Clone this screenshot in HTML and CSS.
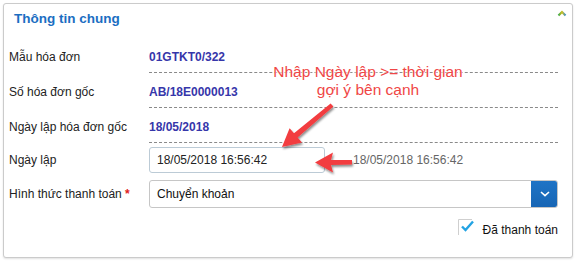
FILE: index.html
```html
<!DOCTYPE html>
<html lang="vi">
<head>
<meta charset="utf-8">
<title>Thông tin chung</title>
<link rel="stylesheet" href="styles.css">
</head>
<body>
<div class="panel">
  <div class="panel-head">
    <h2 class="title">Thông tin chung</h2>
    <svg class="collapse" width="10" height="7" viewBox="0 0 10 7">
      <defs>
        <linearGradient id="cg" x1="0" y1="0" x2="1" y2="0">
          <stop offset="0" stop-color="#3aa84a"/>
          <stop offset="0.5" stop-color="#d8c21e"/>
          <stop offset="1" stop-color="#3a90c8"/>
        </linearGradient>
      </defs>
      <polyline points="1.5,5.5 5,2 8.5,5.5" fill="none" stroke="url(#cg)" stroke-width="2.2"/>
    </svg>
  </div>
  <div class="panel-body">
    <div class="row info">
      <div class="label">Mẫu hóa đơn</div>
      <div class="value">01GTKT0/322</div>
    </div>
    <div class="row info">
      <div class="label">Số hóa đơn gốc</div>
      <div class="value">AB/18E0000013</div>
    </div>
    <div class="row info">
      <div class="label">Ngày lập hóa đơn gốc</div>
      <div class="value">18/05/2018</div>
    </div>
    <div class="row field field-date">
      <div class="label">Ngày lập</div>
      <div class="control-line">
        <div class="text-input">18/05/2018 16:56:42</div>
        <span class="hint">18/05/2018 16:56:42</span>
      </div>
    </div>
    <div class="row field field-select">
      <div class="label">Hình thức thanh toán <span class="req">*</span></div>
      <div class="select">
        <span class="select-text">Chuyển khoản</span>
        <span class="select-btn">
          <svg width="10" height="6" viewBox="0 0 10 6"><polyline points="1,1 5,4.6 9,1" fill="none" stroke="#fff" stroke-width="1.6"/></svg>
        </span>
      </div>
    </div>
    <div class="check-row">
      <svg class="checkbox" width="17" height="16" viewBox="0 0 17 16">
        <path d="M0.5 16 V0.5 H14" fill="none" stroke="#cfcfcf" stroke-width="1"/>
        <polyline points="4,7.5 7.5,11 15,2.5" fill="none" stroke="#23a3e3" stroke-width="2.4"/>
      </svg>
      <span class="check-label">Đã thanh toán</span>
    </div>
  </div>
</div>

<div class="annotation">Nhập Ngày lập &gt;= thời gian<br>gợi ý bên cạnh</div>

<svg class="arrows" width="575" height="262" viewBox="0 0 575 262">
  <defs>
    <filter id="sh" x="-20%" y="-20%" width="140%" height="140%">
      <feDropShadow dx="1" dy="2" stdDeviation="1.3" flood-color="#000" flood-opacity="0.45"/>
    </filter>
  </defs>
  <g fill="#f23c3f" filter="url(#sh)">
    <polygon points="282,147 302,142.5 297.6,137.6 333.4,106.6 330.6,103.4 294,133.2 289.6,128.2"/>
    <polygon points="315,162.5 333,172.5 331,165 352,164.5 352,160 331,160 333,152.5"/>
  </g>
</svg>
</body>
</html>
```
FILE: styles.css
```css
html, body {
  margin: 0;
  padding: 0;
  background: #fff;
}

body {
  position: relative;
  width: 575px;
  height: 262px;
  font-family: "Liberation Sans", Arial, sans-serif;
  font-size: 12px;
  color: #222;
}

.panel {
  box-sizing: border-box;
  margin: 3px 0 0 3px;
  width: 570px;
  height: 255px;
  border: 1px solid #cbcbcb;
  border-radius: 3px;
  box-shadow: 0 1px 2px rgba(0, 0, 0, 0.12);
  background: #fff;
}

.panel-head {
  box-sizing: border-box;
  height: 34px;
  padding: 6px 5px 0 10px;
  display: flex;
  justify-content: space-between;
  align-items: flex-start;
}

.title {
  margin: 0;
  font-size: 13.5px;
  line-height: 17px;
  font-weight: bold;
  color: #1b6ec2;
}

.collapse {
  margin-top: 0;
}

.panel-body {
  padding: 0 14px 0 5px;
}

.row {
  display: grid;
  grid-template-columns: 140px 1fr;
}

.label {
  line-height: 16px;
  color: #222;
}

.info {
  height: 35px;
}

.info .label,
.info .value {
  box-sizing: border-box;
  height: 35px;
  padding-top: 11px;
}

.info .value {
  border-bottom: 1px dashed #8a8a8a;
  font-weight: bold;
  color: #3636aa;
  line-height: 16px;
}

.field {
  align-items: center;
}

.field-date {
  padding-top: 4px;
}

.field-select {
  padding-top: 7px;
}

.control-line {
  display: flex;
  align-items: center;
}

.text-input {
  box-sizing: border-box;
  width: 176px;
  height: 26px;
  border: 1px solid #bccbd6;
  border-radius: 3px;
  padding: 0 7px;
  line-height: 24px;
  color: #222;
}

.hint {
  margin-left: 28px;
  color: #666;
  line-height: 16px;
}

.req {
  color: #e02020;
  font-weight: bold;
}

.select {
  box-sizing: border-box;
  height: 28px;
  border: 1px solid #c6c6c6;
  border-radius: 3px;
  display: flex;
  align-items: stretch;
  overflow: hidden;
}

.select-text {
  flex: 1;
  padding-left: 7px;
  line-height: 26px;
  color: #111;
}

.select-btn {
  width: 27px;
  margin: -1px -1px -1px 0;
  background: linear-gradient(#1f74c6, #1765b4);
  display: flex;
  align-items: center;
  justify-content: center;
}

.check-row {
  display: flex;
  justify-content: flex-end;
  align-items: flex-start;
  padding-top: 11px;
}

.checkbox {
  margin-right: 8px;
}

.check-label {
  margin-top: 3px;
  line-height: 16px;
  color: #111;
}

.annotation {
  position: absolute;
  left: 268px;
  top: 63px;
  width: 200px;
  text-align: center;
  font-size: 15.5px;
  line-height: 18px;
  color: #f04646;
  text-shadow: 0 0 2px #fff, 0 0 2px #fff;
}

.arrows {
  position: absolute;
  left: 0;
  top: 0;
  pointer-events: none;
}
```
